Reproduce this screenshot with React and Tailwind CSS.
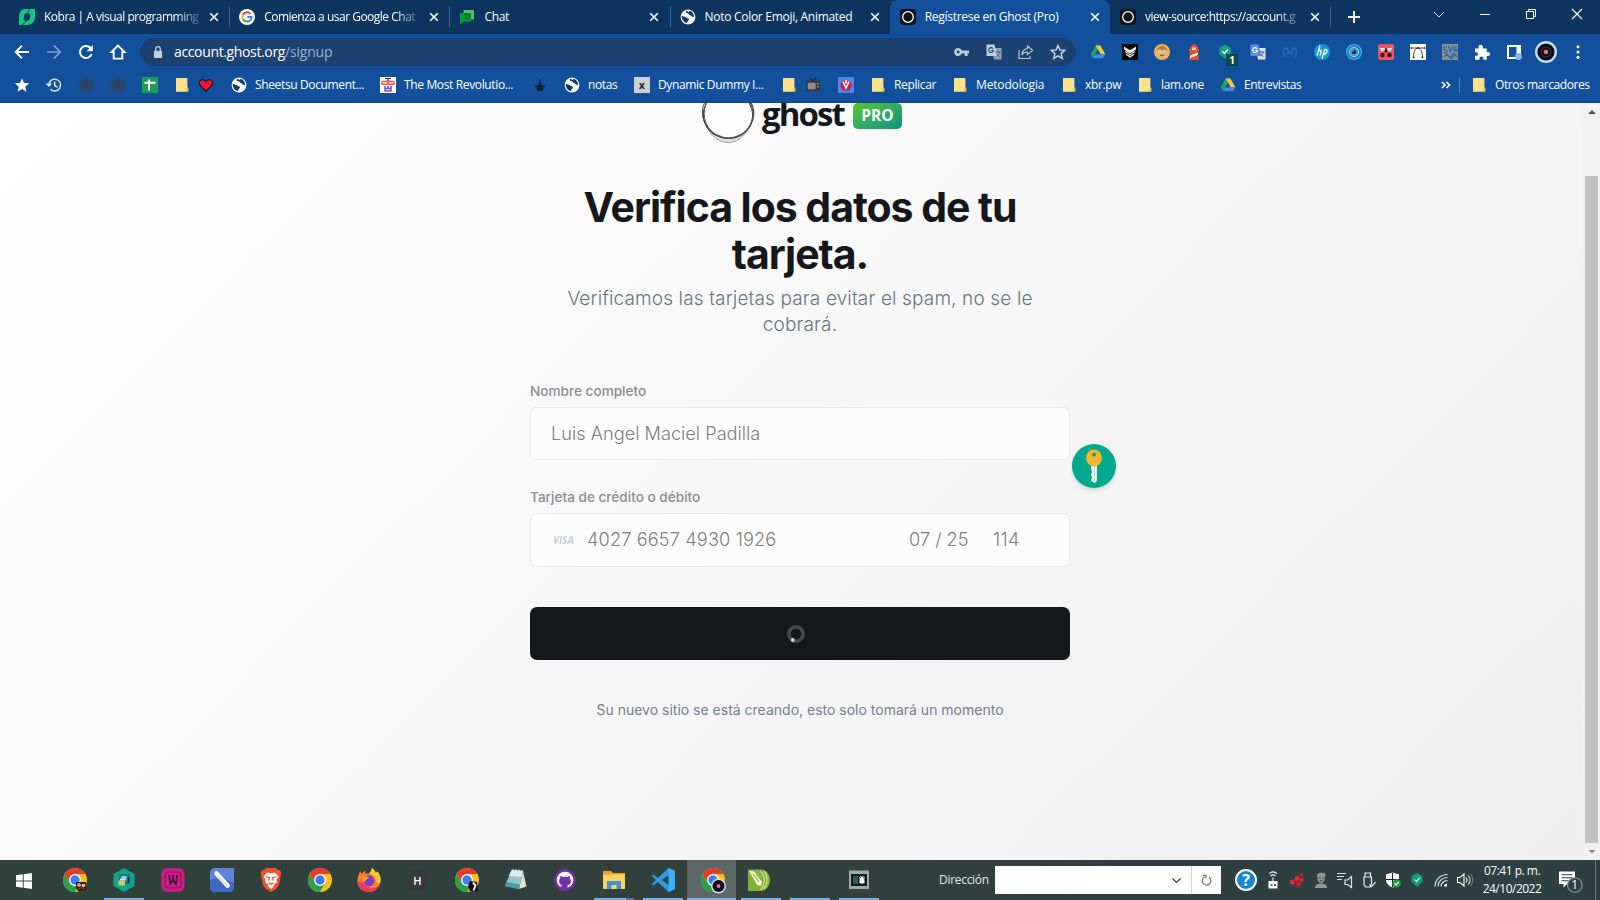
import React from "react";

const svgBase = "block shrink-0 overflow-visible";

function Svg({ size = "w-4 h-4", box = "0 0 16 16", children }) {
  return (
    <svg viewBox={box} className={`${svgBase} ${size}`} fill="none">
      {children}
    </svg>
  );
}

/* ---------- shared glyphs ---------- */

const Globe = () => (
  <Svg>
    <circle cx="8" cy="8" r="7.400" fill="#fff" />
    <path d="M6.200 1.800C5 3.200 6 4.400 7.600 4.300c1.600 0 1 1.700 2.600 1.900 1.300.2 1.200 1.600 2.600 1.600h1.400c-.1-3-2-5.300-4.600-6L8.700 3z" fill="#123b6b" />
    <path d="M1.700 6.800l3.800 1.200c1 .3 1 1.300 2.300 1.300 1.300.2 1.500 1.400.5 2.200-.8.700-.7 1.700-1.500 2.500-3-.4-5.400-3.600-5.100-7.200z" fill="#123b6b" />
  </Svg>
);

const GhostIcon = () => (
  <Svg>
    <rect width="16" height="16" rx="3.500" fill="#111417" />
    <circle cx="8" cy="8" r="5.300" stroke="#fff" strokeWidth="1.300" />
  </Svg>
);

const Drive = () => (
  <Svg>
    <path d="M5.600 1.600h4.800L8 5.700 3 14.200.7 10.200z" fill="#1fa463" />
    <path d="M5.600 1.600h4.800l5 8.600h-4.800z" fill="#fcc934" />
    <path d="M3 14.200l2.400-4h10L13 14.200z" fill="#4688f4" />
    <path d="M8 5.700l2.600 4.500H5.400z" fill="#12509b" />
  </Svg>
);

const Folder = () => (
  <Svg>
    <path d="M2 1h11.400v9.500l.8.500v3.500h-1.500L11.500 14.700H2z" fill="#fde28b" />
    <path d="M11.800 11.500l2.400-.5v3.500h-2z" fill="#f3c84c" />
  </Svg>
);

const Cross = () => (
  <Svg size="w-[10px] h-[10px]" box="0 0 10 10">
    <path d="M1.200 1.200l7.600 7.600M8.800 1.200l-7.600 7.600" stroke="#fff" strokeWidth="1.600" />
  </Svg>
);

const Translate = ({ a = "#5b8def", b = "#dfe5ee" }) => (
  <Svg>
    <path d="M6 4h9.500v11.500H8z" fill={b} />
    <path d="M.5.5h8l3 11.500h-11z" fill={a} />
    <path d="M7.200 4.800A2.400 2.400 0 1 0 7.500 6.500H5.300" stroke={a === "#5b8def" ? "#fff" : "#1d4272"} strokeWidth="1.100" />
    <path d="M9.500 8h5M12 7v1.200M13.600 8.200c-.5 2-1.800 3.300-3 4M10.500 9.600c.7 1.500 1.800 2.300 3 3" stroke="#4a5a70" strokeWidth=".9" />
  </Svg>
);

const Disc = () => (
  <Svg size="w-[22px] h-[22px]" box="0 0 22 22">
    <circle cx="11" cy="11" r="11" fill="#c3dcf8" />
    <circle cx="11" cy="11" r="8.600" fill="#0c0b14" />
    <circle cx="11" cy="11" r="5" stroke="#3a3142" strokeWidth="1.200" />
    <circle cx="11" cy="11" r="2.400" fill="#e5566a" />
    <circle cx="11" cy="11" r=".7" fill="#fff" />
  </Svg>
);

/* ---------- tab strip ---------- */

const Kobra = () => (
  <Svg>
    <path d="M5 0h11v7c0 5.500-3 9-8 9H0V8c0-3.500 1.500-7 5-8z" fill="#17c77f" />
    <path d="M6.500 4.500H11v3.700c0 2.200-1.300 3.600-3.300 3.600H4.800V8c0-2 .5-3 1.700-3.500z" fill="#0d3560" />
    <path d="M11 0l-3 4.500M8 11.800L3 16" stroke="#0d3560" strokeWidth=".8" />
  </Svg>
);

const GoogleG = () => (
  <Svg>
    <circle cx="8" cy="8" r="8" fill="#fff" />
    <path d="M11.400 4.800A4.600 4.600 0 0 0 4 5.700" stroke="#ea4335" strokeWidth="2" />
    <path d="M4 5.700a4.800 4.800 0 0 0 0 4.600" stroke="#fbbc05" strokeWidth="2" />
    <path d="M4 10.300a4.600 4.600 0 0 0 7.100 1.100" stroke="#34a853" strokeWidth="2" />
    <path d="M11.100 11.400A4.600 4.600 0 0 0 12.600 8H8.200" stroke="#4285f4" strokeWidth="2" />
  </Svg>
);

const ChatIcon = () => (
  <Svg>
    <path d="M4.500 1H15v9.500h-3V4H4.500z" fill="#5bbb7b" />
    <path d="M1 4h11v8.500H4.500L1 15.500z" fill="#00a23a" />
    <path d="M4.500 4H12v6.500H4.500z" fill="#00832d" />
  </Svg>
);

const tabs = [
  { t: "Kobra | A visual programming", icon: <Kobra />, fade: true },
  { t: "Comienza a usar Google Chat", icon: <GoogleG />, fade: true },
  { t: "Chat", icon: <ChatIcon /> },
  { t: "Noto Color Emoji, Animated", icon: <Globe /> },
  { t: "Regístrese en Ghost (Pro)", icon: <GhostIcon />, active: true },
  { t: "view-source:https://account.g", icon: <GhostIcon />, fade: true },
];

function Tab({ tab, first, afterActive }) {
  const sep = first || tab.active || afterActive ? "border-transparent" : "border-[#3f6c9c]";
  return (
    <div className={`flex h-[34px] w-[220.2px] shrink-0 ${tab.active ? "rounded-t-lg bg-[#12509b]" : ""}`}>
      <div className={`mt-[7px] flex h-5 w-full items-center border-l pl-[9px] ${sep}`}>
        {tab.icon}
        <span
          className={`ml-[9px] w-[156px] shrink-0 whitespace-nowrap text-[12px] leading-5 text-white ${
            tab.fade
              ? "tracking-[-0.5px] [mask-image:linear-gradient(to_right,#000_84%,transparent_103%)]"
              : "tracking-[-0.29px]"
          }`}
        >
          {tab.t}
        </span>
        <span className="ml-[9px]">
          <Cross />
        </span>
      </div>
    </div>
  );
}

function TabStrip() {
  return (
    <div className="flex h-[34px] bg-[#0d3560] pl-[9px]">
      {tabs.map((tab, i) => (
        <Tab key={tab.t} tab={tab} first={i === 0} afterActive={i === 5} />
      ))}
      <div className="mt-[7px] flex h-5 w-[46px] items-center justify-center border-l border-[#3f6c9c]">
        <Svg size="w-3 h-3" box="0 0 12 12">
          <path d="M6 0v12M0 6h12" stroke="#fff" strokeWidth="2" />
        </Svg>
      </div>
      <div className="ml-auto flex h-7 items-center">
        <div className="flex w-[46px] justify-center">
          <Svg size="w-[10px] h-[10px]" box="0 0 10 10">
            <path d="M0 3l5 5 5-5" stroke="#d7e2ef" />
          </Svg>
        </div>
        <div className="flex w-[46px] justify-center">
          <div className="h-px w-[10px] bg-white" />
        </div>
        <div className="flex w-[46px] justify-center">
          <Svg size="w-[10px] h-[10px]" box="0 0 10 10">
            <path d="M.5 2.500h7v7h-7zM2.500 2.500v-2h7v7h-2" stroke="#fff" />
          </Svg>
        </div>
        <div className="flex w-[46px] justify-center">
          <Svg size="w-[10px] h-[10px]" box="0 0 10 10">
            <path d="M0 0l10 10M10 0L0 10" stroke="#fff" strokeWidth="1.100" />
          </Svg>
        </div>
      </div>
    </div>
  );
}

/* ---------- toolbar ---------- */

const navIcons = [
  <Svg key="b"><path d="M15 8H2.500M8 1.700L1.700 8 8 14.300" stroke="#fff" strokeWidth="1.900" /></Svg>,
  <Svg key="f"><path d="M1 8h12.500M8 1.700L14.300 8 8 14.300" stroke="#7ea1cc" strokeWidth="1.700" /></Svg>,
  <Svg key="r">
    <path d="M13.600 10.200A6 6 0 1 1 12.300 3.800l1.500 1.600" stroke="#fff" strokeWidth="2" />
    <path d="M14.800 1v6.200H8.600z" fill="#fff" />
  </Svg>,
  <Svg key="h"><path d="M8 1.500L1.500 8H3.700v6.600h8.600V8h2.200z" stroke="#fff" strokeWidth="1.900" /></Svg>,
];

const urlIcons = [
  <Svg key="k">
    <path d="M7.800 6.500H15v3h-1.500V12h-2.700V9.500H7.800a4 4 0 1 1 0-3z" fill="#c3cddb" />
    <circle cx="4.200" cy="8" r="1.400" fill="#1d4272" />
  </Svg>,
  <Translate key="t" a="#c3cddb" b="#8ea2bd" />,
  <Svg key="s">
    <path d="M1 6v8.500h11V12" stroke="#b9c5d6" strokeWidth="1.200" />
    <path d="M9.500 2l5.200 4.300-5.200 4.300V8c-2.500 0-4.300.8-5.700 2.900C4.200 7.500 6 5 9.500 4.600z" stroke="#b9c5d6" strokeWidth="1.200" />
  </Svg>,
  <Svg key="st">
    <path d="M8 1.500l2 4.500 4.800.4-3.700 3.200 1.200 4.800L8 11.800l-4.300 2.600 1.200-4.800L1.200 6.400 6 6z" stroke="#c9d3e0" strokeWidth="1.400" />
  </Svg>,
];

const extensions = [
  <Drive key="d" />,
  <Svg key="owl">
    <rect width="16" height="16" fill="#080808" />
    <path d="M2 2.500l3.500 2.300L8 6l2.500-1.200L14 2.500v3L10.500 8 8 9.500 5.500 8 2 5.500z" fill="#e8e8e8" />
    <path d="M3 7.500l3.500 2M13 7.500l-3.500 2M4 10.300L8 13l4-2.700M6.500 10.500h3" stroke="#e8e8e8" strokeWidth="1.300" />
  </Svg>,
  <Svg key="face">
    <circle cx="8" cy="8" r="8" fill="#f0b64c" />
    <circle cx="8" cy="8.500" r="5.300" fill="#dfb183" />
    <path d="M3 7a5 5 0 0 1 10 0l-2-1.500H5z" fill="#b3772d" />
    <circle cx="5.800" cy="8" r="1.200" fill="#fff" /><circle cx="10.200" cy="8" r="1.200" fill="#fff" />
    <circle cx="5.900" cy="8" r=".6" fill="#333" /><circle cx="10.100" cy="8" r=".6" fill="#333" />
    <path d="M6 11c1.300.8 2.700.8 4 0" stroke="#8b4a2b" />
  </Svg>,
  <Svg key="lh">
    <path d="M8 0l4 3v2h1v2h-1l1 9H3l1-9H3V5h1V3z" fill="#ef4b2f" />
    <path d="M6 3.500h4V6H6z" fill="#ffd9a0" />
    <path d="M4.500 11.500l7-3V11l-7.300 3z" fill="#fff" />
  </Svg>,
  <div key="k" className="relative">
    <Svg><path d="M7 .5l5.700 3.200v6.600L7 14.500l-5.700-4.200V3.700z" fill="#16a182" /><path d="M4.300 7.300l2 2 3.600-3.800" stroke="#fff" strokeWidth="1.300" /></Svg>
    <span className="absolute left-2 top-[10px] flex h-3 w-3 items-center justify-center bg-[#0d4a4a] text-[10px] font-bold leading-3 text-white">1</span>
  </div>,
  <Translate key="t" />,
  <Svg key="m"><path d="M3 12.500C1 10 1 5 3.500 4.500 5.500 4.300 7 7.500 8 9.500c1-2 2.500-5.200 4.500-5C15 5 15 10 13 12.500M5.500 11V8M10.500 11V8" stroke="#2566b5" strokeWidth="1.900" /></Svg>,
  <Svg key="hp">
    <circle cx="8" cy="8" r="8" fill="#1598d6" />
    <path d="M6 1.500L3 11.500M4.700 7c1-1.300 3-1.300 2.500.3L6 11.500M10.800 5L8 14.500M10.500 6c1.200-1 3-.7 2.500 1.200-.5 2-1.200 3.500-3.600 3.500" stroke="#fff" strokeWidth="1.300" />
  </Svg>,
  <Svg key="eye">
    <circle cx="8" cy="8" r="7.400" fill="#1c6aa8" stroke="#3fb5e8" strokeWidth="1.200" />
    <circle cx="8" cy="8" r="4.800" fill="#3a9fd6" stroke="#9adcf5" strokeWidth="1" />
    <circle cx="8" cy="8" r="2.300" fill="#062c49" /><circle cx="7" cy="7" r=".7" fill="#d7f2ff" />
  </Svg>,
  <Svg key="red">
    <rect width="16" height="16" rx="2" fill="#ea5465" />
    <path d="M2 4.500l5 .8M14 4.500l-5 .8M3 6.800l3-1M13 6.800l-3-1" stroke="#fff" strokeWidth="1.500" />
    <path d="M6.800 4.500h2.400v4H6.800z" fill="#4b1a2a" />
    <circle cx="4.500" cy="11" r="2.300" fill="#3a1420" /><circle cx="11.500" cy="11" r="2.300" fill="#3a1420" />
  </Svg>,
  <Svg key="bez">
    <rect width="16" height="16" fill="#fff" />
    <path d="M1 4h14M3.500 13c0-5.500 2-9 4.500-9s4.500 3.500 4.500 9" stroke="#333" strokeWidth=".9" />
    <path d="M7 3h2v2H7zM.5 3.200h1.600v1.600H.5zM13.900 3.200h1.600v1.600h-1.600zM2.700 12.500h1.800v1.800H2.700zM11.500 12.500h1.800v1.800h-1.800z" fill="#333" />
  </Svg>,
  <Svg key="svg">
    <rect width="16" height="16" fill="#8c8f8e" />
    <path d="M5 3C1 2 1 5.500 3.500 6S5 9.500 1.500 8.500M6.500 2l2 6 2.500-6M15 3c-4-1-4 5 0 4V5.500h-2M2 13l3-3 3 4 4-5 3 4M9 15l5-5" stroke="#2268b0" strokeWidth="1.300" />
  </Svg>,
  <Svg key="pz">
    <path d="M1 4.500h3.800C4 2 5.200.8 6.700.8S9.400 2 8.700 4.500h4V8.300C15 7.500 16 8.700 16 10s-1 2.500-3.300 1.700v4H9.300c.7-2.200-.5-3.200-1.800-3.200s-2.500 1-1.800 3.200H1v-4.200c2.300.7 3-.5 3-1.600s-.7-2.200-3-1.600z" fill="#fff" />
  </Svg>,
  <Svg key="sp">
    <path d="M2 2h12v12H2z" stroke="#fff" strokeWidth="2" /><path d="M10.500 2H14v9h-3.500z" fill="#fff" />
    <circle cx="12.500" cy="12.500" r="3.400" fill="#8ab4f8" />
  </Svg>,
  <Disc key="disc" />,
  <Svg key="dots"><circle cx="8" cy="2.700" r="1.500" fill="#fff" /><circle cx="8" cy="8" r="1.500" fill="#fff" /><circle cx="8" cy="13.300" r="1.500" fill="#fff" /></Svg>,
];

function Toolbar() {
  return (
    <div className="flex h-[36px] items-center pl-[6px]">
      {navIcons.map((icon, i) => (
        <div key={i} className="flex w-8 justify-center">{icon}</div>
      ))}
      <div className="ml-[6px] flex h-7 w-[936px] items-center rounded-full bg-[#1d4272] pl-[12px] pr-[2px]">
        <Svg size="w-3 h-3" box="0 0 12 12">
          <path d="M2 4.800h8V12H2z" fill="#c3cddb" />
          <path d="M3.700 5V3a2.300 2.300 0 0 1 4.600 0v2" stroke="#c3cddb" strokeWidth="1.300" />
        </Svg>
        <div className="ml-[10px] whitespace-nowrap text-[14px] leading-5 tracking-[-0.36px] text-white">
          account.ghost.org<span className="tracking-[-0.2px] text-[#9db5d3]">/signup</span>
        </div>
        <div className="ml-auto flex">
          {urlIcons.map((icon, i) => (
            <div key={i} className="flex w-8 justify-center">{icon}</div>
          ))}
        </div>
      </div>
      <div className="ml-[6px] flex items-center">
        {extensions.map((icon, i) => (
          <div key={i} className="flex w-8 items-center justify-center">{icon}</div>
        ))}
      </div>
    </div>
  );
}

/* ---------- bookmarks ---------- */

const Dim = () => (
  <Svg>
    <circle cx="8" cy="8" r="7.400" fill="#20497a" stroke="#2f4763" />
    <path d="M8 3l2.500 5L8 13 5.500 8z" fill="#3a3f52" /><circle cx="8" cy="8" r="1.500" fill="#6b3040" />
  </Svg>
);

const bookmarks = [
  { w: "w-6", icon: <Folder /> },
  { w: "w-[33px]", icon: <Svg><path d="M8 14.500L2 8.200C.5 6 1.500 2.800 4.300 2.600 6 2.500 7.400 3.500 8 4.800c.6-1.300 2-2.300 3.700-2.200C14.500 2.800 15.500 6 14 8.200z" fill="#f4142f" stroke="#26101c" strokeWidth="1.200" /></Svg> },
  { w: "w-[149px]", icon: <Globe />, t: "Sheetsu Document..." },
  {
    w: "w-[152px]", t: "The Most Revolutio...",
    icon: (
      <Svg>
        <rect width="16" height="16" fill="#fff" />
        <path d="M5 1.500h6M6.500 3h3" stroke="#333" strokeWidth="1.200" />
        <path d="M2 4.500h12v2.700H2zM3.500 7.200h9M8 3v5" stroke="#ef5a3f" strokeWidth="1.400" />
        <path d="M5 9v5h6V9M5 11.500h6M8 9v2" stroke="#7a4bd6" strokeWidth="1.500" />
      </Svg>
    ),
  },
  { w: "w-8", icon: <Svg><path d="M8 1l1.300 6.200 2.700 2.300-1.800 4.500H5.800L4 9.500l2.700-2.300z" fill="#0c2237" /><path d="M3 7l2 6M13 7l-2 6" stroke="#1d3f63" /></Svg> },
  { w: "w-[70px]", icon: <Globe />, t: "notas" },
  {
    w: "w-[147px]", t: "Dynamic Dummy I...",
    icon: <div className="flex h-4 w-4 shrink-0 items-center justify-center bg-[#cfcfcf] text-[10px] font-bold leading-4 text-[#222]">x</div>,
  },
  { w: "w-6", icon: <Folder /> },
  {
    w: "w-[33px]",
    icon: (
      <Svg>
        <path d="M4.500.8L8 4l3.500-3.200" stroke="#222" strokeWidth="1.100" />
        <rect x="1" y="4" width="14" height="10" rx="1.300" fill="#3b3434" /><rect x="2.700" y="5.700" width="8" height="6.500" rx=".8" fill="#8d8a92" />
        <path d="M12.800 6v1.500M12.800 9v1.500" stroke="#c9c3c0" strokeWidth="1.200" />
      </Svg>
    ),
  },
  { w: "w-8", icon: <Svg><rect width="16" height="16" fill="#4c86ee" /><circle cx="8" cy="8.300" r="5.600" fill="#cf1f3c" /><path d="M5 4.500L8 11l3-6.500M8 3v3.500" stroke="#fff" strokeWidth="1.600" /></Svg> },
  { w: "w-[82px]", icon: <Folder />, t: "Replicar" },
  { w: "w-[109px]", icon: <Folder />, t: "Metodologia", wide: true },
  { w: "w-[76px]", icon: <Folder />, t: "xbr.pw" },
  { w: "w-[83px]", icon: <Folder />, t: "lam.one" },
  { w: "w-[218px]", icon: <Drive />, t: "Entrevistas" },
];

const bookmarkIcons = [
  <Svg key="a"><path d="M8 1.200l2 4.700 5.200.4-4 3.400 1.300 5L8 12l-4.500 2.700 1.300-5-4-3.400L6 5.900z" fill="#fff" /></Svg>,
  <Svg key="b"><path d="M2.800 8a5.900 5.900 0 1 1 1.700 4.200M.5 6.500L2.800 9l2.500-2.500M8.700 4.500v4l2.800 1.700" stroke="#e6eef8" strokeWidth="1.400" /></Svg>,
  <Dim key="c" />,
  <Dim key="d" />,
  <Svg key="e"><rect width="16" height="16" fill="#1b9c57" /><path d="M7 2.500v11M2.500 5.700h11" stroke="#fff" strokeWidth="1.900" /></Svg>,
];

function Bookmarks() {
  return (
    <div className="flex h-[33px] items-center border-b border-[#0d4688] pb-[3px] pl-[6px] text-[12px] leading-5 text-white">
      {bookmarkIcons.map((icon, i) => (
        <div key={i} className="flex w-8 shrink-0 justify-center">{icon}</div>
      ))}
      <div className="ml-2 flex items-center">
        {bookmarks.map((b, i) => (
          <div key={i} className={`flex shrink-0 items-center gap-2 ${b.w}`}>
            {b.icon}
            {b.t && <span className={`whitespace-nowrap ${b.wide ? "tracking-[-0.16px]" : "tracking-[-0.36px]"}`}>{b.t}</span>}
          </div>
        ))}
      </div>
      <Svg size="w-4 h-4">
        <path d="M4 5l3 3-3 3M8.500 5l3 3-3 3" stroke="#fff" strokeWidth="1.600" />
      </Svg>
      <div className="ml-[5px] h-4 w-px bg-[#4f82bd]" />
      <div className="ml-[11px] flex items-center gap-2">
        <Folder />
        <span className="whitespace-nowrap tracking-[-0.44px]">Otros marcadores</span>
      </div>
    </div>
  );
}

/* ---------- page ---------- */

function GhostLogo() {
  return (
    <div className="-mt-[17px] flex h-[57px] w-full items-center pl-[171px]">
      <Svg size="w-[54px] h-[54px]" box="0 0 54 54">
        <ellipse cx="27" cy="29" rx="22.500" ry="25.500" fill="#e3e4e4" stroke="#8d8f91" strokeWidth=".8" />
        <ellipse cx="29" cy="27" rx="23" ry="23.500" fill="#e9eaea" stroke="#85878a" strokeWidth=".9" />
        <ellipse cx="26.500" cy="26" rx="25.500" ry="23.500" transform="rotate(28 26.500 26)" fill="#fdfdfd" stroke="#505254" strokeWidth="1" />
        <ellipse cx="27.500" cy="26" rx="25.300" ry="24" transform="rotate(-18 27.500 26)" stroke="#3b3d3f" strokeWidth="1.100" />
        <ellipse cx="27.500" cy="25.500" rx="24.300" ry="25" stroke="#55585b" strokeWidth="1" />
      </Svg>
      <span className="-mt-px ml-[7px] w-[84px] whitespace-nowrap text-[33px] font-bold leading-[44px] tracking-[-1.9px] text-[#15171a]">ghost</span>
      <span className="ml-[7px] mt-[3px] flex h-[26px] w-[49px] items-center justify-center rounded-[5px] bg-linear-to-br from-[#56c70f] to-[#06907f] text-[15.5px] font-bold leading-none text-white">
        PRO
      </span>
    </div>
  );
}

const field = "flex items-center rounded-[7px] border border-[#e9eaeb] bg-[#fcfcfc] text-[18.2px] font-light text-[#7c7e80]";
const label = "text-[13.6px] font-medium leading-5 text-[#8a8c8e]";

function SignupPage() {
  return (
    <main className="relative flex h-[757px] overflow-hidden bg-linear-135 from-white to-[#eeeeee]">
      <div className="flex-1 pl-[530px]">
        <div className="w-[540px] font-['Inter',sans-serif]">
          <div className="font-['Open_Sans',sans-serif]">
            <GhostLogo />
          </div>
          <h1 className="mt-[41px] text-center text-[41px] font-bold leading-[47px] tracking-[-1.04px] text-[#15171a]">
            Verifica los datos de tu
            <br />
            tarjeta.
          </h1>
          <p className="mt-[8px] text-center text-[19px] font-light leading-[26px] tracking-[0.14px] text-[#66757d]">
            Verificamos las tarjetas para evitar el spam, no se le
            <br />
            cobrará.
          </p>
          <div className={`mt-[43px] ${label}`}>Nombre completo</div>
          <div className={`mt-[6px] h-[53px] pl-[20px] ${field}`}>Luis Angel Maciel Padilla</div>
          <div className={`mt-[27px] ${label}`}>Tarjeta de crédito o débito</div>
          <div className={`mt-[6px] h-[54px] pl-[22px] ${field}`}>
            <span className="w-[34px] font-['Open_Sans',sans-serif] text-[10px] font-bold italic text-[#c8ced8]">VISA</span>
            <span className="w-[322px] tracking-[0.12px]">4027 6657 4930 1926</span>
            <span className="w-[84px]">07 / 25</span>
            <span className="tracking-[0.3px]">114</span>
          </div>
          <div className="mt-[40px] flex h-[53px] items-center justify-center rounded-[7px] bg-[#15171a] pr-2">
            <Svg size="w-[18px] h-[18px]" box="0 0 18 18">
              <circle cx="9" cy="9" r="7.200" stroke="#46484b" strokeWidth="3.600" />
              <circle cx="5.800" cy="15" r="1.900" fill="#d2d3d4" />
            </Svg>
          </div>
          <p className="mt-[40px] text-center text-[14px] leading-5 text-[#738087]">
            Su nuevo sitio se está creando, esto solo tomará un momento
          </p>
        </div>
      </div>
      <div className="flex w-[17px] flex-col items-center bg-[#f1f1f1]">
        <Svg size="w-[17px] h-[17px]" box="0 0 17 17"><path d="M5 11h8L9 7z" fill="#505050" /></Svg>
        <div className="mt-[56px] h-[667px] w-[13px] bg-[#c1c1c1]" />
        <Svg size="w-[17px] h-[17px]" box="0 0 17 17"><path d="M5.500 7h7L9 10.700z" fill="#8a8a8a" /></Svg>
      </div>
      <div className="absolute left-[1072px] top-[341px] rounded-full shadow-md">
        <Svg size="w-[44px] h-[44px]" box="0 0 44 44">
          <circle cx="22" cy="22" r="22" fill="#00a88e" />
          <path d="M19.300 20h5.600v17l-2.300 2-3.300-2v-2l1.200-1.500-1.200-1.500v-2.500l1.200-1.500-1.200-1.500z" fill="#fff" />
          <path d="M22.500 22v15" stroke="#b7d8d6" strokeWidth="1.300" />
          <ellipse cx="22" cy="14" rx="8" ry="8.500" fill="#f1b72d" />
          <circle cx="22" cy="10.500" r="1.900" fill="#4d8f52" />
        </Svg>
      </div>
    </main>
  );
}

/* ---------- taskbar ---------- */

function Chrome({ children }) {
  return (
    <Svg size="w-6 h-6" box="0 0 24 24">
      <circle cx="12" cy="12" r="12" fill="#fbc116" />
      <path d="M1.600 6a12 12 0 0 1 20.800 0H12L6.800 15z" fill="#e33b2e" />
      <path d="M1.600 6A12 12 0 0 0 12 24l5.200-9H6.800z" fill="#2aa14b" />
      <circle cx="12" cy="12" r="6" fill="#fff" />
      <circle cx="12" cy="12" r="4.700" fill="#3b7de9" />
      {children}
    </Svg>
  );
}

const apps = [
  { icon: <Chrome><path d="M13 14h10v9l-4-1-3 2-3-4z" fill="#2b1a14" /><circle cx="16" cy="17" r="2" fill="#d9a27e" /><circle cx="20.500" cy="17.500" r="1.800" fill="#e8c4a4" /><path d="M15 21l4-1.500 3 2" stroke="#c53a34" /></Chrome> },
  { run: "full", icon: <Svg size="w-6 h-6" box="0 0 24 24"><path d="M12 0l10.500 6v12L12 24 1.500 18V6z" fill="#0fa58a" /><rect x="7" y="6" width="11" height="10" fill="#2c6f86" /><path d="M9.500 8h5v4.500h-5z" fill="#8ed8ef" /><rect x="6.500" y="12.500" width="6.500" height="5" fill="#e0c86a" /><path d="M8.500 12.500V11h2.500v1.500" stroke="#f3f3f3" /><path d="M16.500 9v6" stroke="#143d49" strokeWidth="1.500" /></Svg> },
  { icon: <Svg size="w-6 h-6" box="0 0 24 24"><rect x=".5" width="23" height="24" rx="6" fill="#cf1c86" /><path d="M4 16V8c0-2.500 1-4 4-4h8c3 0 4 1.500 4 4v8c0 2.500-1 4-4 4H8c-3 0-4-1.500-4-4z" stroke="#7d1a5e" strokeWidth="1.200" /><path d="M8 7l1.500 9L12 12l3 4 1.200-9M12 7v4" stroke="#3d1235" strokeWidth="1.700" /></Svg> },
  { icon: <Svg size="w-6 h-6" box="0 0 24 24"><path d="M5 0h19v19c0 3-2 5-5 5H5c-3 0-5-2-5-5V5c0-3 2-5 5-5z" fill="#5e83d8" /><path d="M0 12c8-3 16-1 24 3v4c0 3-2 5-5 5H5c-3 0-5-2-5-5z" fill="#4268c4" /><path d="M6.500 5.500l11 12" stroke="#fff" strokeWidth="4.500" strokeLinecap="round" /><path d="M8 8l9.500 10" stroke="#c5d1ee" strokeWidth="1.200" /></Svg> },
  { icon: <Svg size="w-6 h-6" box="0 0 24 24"><path d="M7 0h10l2.200 2.300 1.800-.3 1.500 3.200-.6 2L20 17l-3 4-5 3-5-3-3-4L2.100 7.200l-.6-2L3 2l1.800.3z" fill="#f4502a" /><path d="M8 4.500l4 .8 4-.8 3.500 4.300-2.200 3 .7 2.500-3.200 2.500v1.700L12 21l-2.800-2.500v-1.700L6 14.300l.7-2.500-2.200-3z" fill="#fff" /><path d="M6.500 8.500l4 1.200-.8 3M17.500 8.500l-4 1.200.8 3M9.500 15l2.500 1.200 2.500-1.200" stroke="#f4502a" strokeWidth="1.300" /></Svg> },
  { icon: <Chrome /> },
  { icon: <Svg size="w-6 h-6" box="0 0 24 24"><path d="M12 24C5 24 0 19 .5 12 .8 8 2 5 3.500 3l.7 3C6 4 7 3 8.500 2.500L8 5.500h4C14 4 14.500 2 14.800 0c2 1.200 3.400 3 4 5L20.500 3.500C23 7 24 10 23.500 13.500 23 19.500 18 24 12 24z" fill="#ff7b2e" /><path d="M14.800 0c2 1.200 3.400 3 4 5L20.500 3.500C23 7 24 10 23.500 13.500 22.500 17 20 16 19 12c-1-4-4-5-7-6.500C14 4 14.500 2 14.800 0z" fill="#ffc936" /><path d="M1 15c2 7 7 9 11 9s9-2 11-8c-3 4-7 5-10 4s-5-3-7-5-4-2-5 0z" fill="#f0365c" /><circle cx="12" cy="12.800" r="5.500" fill="#7a3ecb" /><path d="M5 9c3-1.500 5-.5 7 .5-1 1.500-3 1.500-3.500 3.500S5 13 5 9z" fill="#ff9c2e" /></Svg> },
  { icon: <div className="flex h-[18px] w-[18px] items-center justify-center bg-[#363a40] text-[11px] font-semibold leading-none text-white">H</div> },
  { icon: <Chrome><path d="M15 13l7 1 1 9h-8l-2-5z" fill="#0d1015" /><path d="M18 14.500l2.500 3-2 5" stroke="#f2f2f2" strokeWidth="2" /></Chrome> },
  { icon: <Svg size="w-6 h-6" box="0 0 24 24"><path d="M7.500 2L19 3l-4 18L1 18z" fill="#8fc5cf" /><path d="M7.500 2L19 3l-1.500 6L4.800 8z" fill="#d9eef0" /><path d="M19 3l3.500 15.500L15 21z" fill="#e2dfd0" /><path d="M3 14l13 2.500-1 4.500L1 18z" fill="#4f97a8" /><path d="M9 1v2M12 1.200v2M15 1.500v2M18 1.800v2" stroke="#f5f5f5" /></Svg> },
  { icon: <Svg size="w-6 h-6" box="0 0 24 24"><circle cx="12" cy="12" r="11" fill="#732fa5" /><circle cx="12" cy="12" r="8.300" fill="#fff" /><path d="M9.600 20.500v-2.600c-2.200.5-2.700-1-3-1.500M9.700 17c-2-.3-3.400-1.200-3.400-4 0-1 .4-1.800 1-2.300-.2-.7-.2-1.500.1-2.400.8 0 1.600.4 2.400 1 1.400-.4 3-.4 4.400 0 .8-.6 1.600-1 2.400-1 .3.900.3 1.700.1 2.400.6.500 1 1.300 1 2.300 0 2.800-1.400 3.700-3.400 4v3.500H9.700z" fill="#732fa5" stroke="#732fa5" strokeWidth=".5" /></Svg> },
  { run: "split", icon: <Svg size="w-6 h-6" box="0 0 24 24"><path d="M1 3h8l2 2h12v5H1z" fill="#e8a526" /><path d="M1 6.500h22V21H1z" fill="#fbd562" /><path d="M5 21v-8h14v8h-4.500v-4h-5v4z" fill="#3d93d2" /></Svg> },
  { run: "full", icon: <Svg size="w-6 h-6" box="0 0 24 24"><path d="M17.500 0L24 3v18l-6.500 3L7 14l-4.300 3.500L.5 16.300 5 12 .5 7.700l2.200-1.200L7 10zM18 6.800L11 12l7 5.200z" fill="#2b9ae8" fillRule="evenodd" /><path d="M17.500 0L24 3v18l-6.500 3z" fill="#40aef5" /></Svg> },
  { run: "active", icon: <Chrome><circle cx="17.500" cy="18" r="7.500" fill="#c3dcf8" /><circle cx="17.500" cy="18" r="6" fill="#0c0b14" /><circle cx="17.500" cy="18" r="1.900" fill="#ef7286" /></Chrome> },
  { run: "full", shift: true, icon: <Svg size="w-6 h-6" box="0 0 24 24"><path d="M1 1.500h13c5 0 9 5 9 10.500s-4 11-9 11H1z" fill="#7eb338" /><path d="M13 3c5 4 6 12 1 19M17 3c4 5 4 13 0 18" stroke="#c6e08b" strokeWidth="1.300" /><path d="M2 3l3 5 5 9 4 1 1-4-4-7-5-4z" fill="#f3f7df" /><path d="M6 6l6 8M9 6l5 6" stroke="#7eb338" strokeWidth="1.100" /></Svg> },
  { run: "full", icon: null },
  { run: "full", icon: <Svg size="w-6 h-6" box="0 0 24 24"><rect x="2" y="2.500" width="20" height="18.500" fill="#a3a8a8" /><rect x="4" y="6" width="16" height="12" fill="#0e1c1e" /><path d="M6 8h5v8H6z" fill="#31595b" /><ellipse cx="15" cy="12.500" rx="2.400" ry="3.300" fill="#fff" /><path d="M12 9.500l6 5M18 9.500l-6 5M13.500 8l1.500 2 1.500-2" stroke="#fff" /></Svg> },
];

function AppCell({ app }) {
  return (
    <div className={`flex h-10 w-[49px] shrink-0 flex-col items-center ${app.run === "active" ? "bg-[#5b6866]" : ""}`}>
      <div className={`flex h-[38px] items-center pt-[2px] ${app.shift ? "pr-[3px]" : ""} ${app.run === "active" ? "pl-[2px]" : ""}`}>{app.icon}</div>
      {app.run === "split" && (
        <div className="flex h-[2px] w-10">
          <div className="w-8 bg-[#76b0e8]" />
          <div className="flex-1 bg-[#4d74a0]" />
        </div>
      )}
      {app.run === "full" && <div className="h-[2px] w-10 bg-[#76b0e8]" />}
      {app.run === "active" && <div className="h-[2px] w-full bg-[#76b0e8]" />}
    </div>
  );
}

const tray = [
  <Svg key="a" size="w-4 h-[18px]" box="0 0 16 18"><path d="M3.500 10h9v7.500h-9z" fill="#fff" /><path d="M8 10V6.500M5.500 5c1.500-1.500 3.500-1.500 5 0M4 2.700c2.500-2.300 5.500-2.300 8 0" stroke="#fff" strokeWidth="1.100" /><path d="M5.500 14h2M9 14h2" stroke="#2d3f3f" strokeWidth="1.300" /></Svg>,
  <Svg key="b"><path d="M4 10l3-3 4-1 2-4M7 7l2 6" stroke="#8d1a20" strokeWidth="1.500" /><circle cx="3.500" cy="10" r="2.600" fill="#dd2430" /><circle cx="8" cy="6.500" r="2.500" fill="#e42a36" /><circle cx="12.500" cy="3" r="1.900" fill="#c72029" /><circle cx="9.500" cy="12" r="2.500" fill="#c72029" /><circle cx="12.500" cy="8" r="2" fill="#dd2430" /></Svg>,
  <Svg key="c"><path d="M4 2.500c2-2 6-2.500 8.500-1L11.500 8c-.5 2-2 3-3.500 3s-3-1-3.500-3z" fill="#8f9797" /><path d="M2 16c0-3 2.500-4.500 6-4.500s6 1.500 6 4.500z" fill="#8f9797" /><path d="M5.500 6h2M9 6h2M6.800 8.700h2.500" stroke="#3a4646" /></Svg>,
  <Svg key="d"><path d="M0 1.500h9M0 4.500h7M0 7.500h5" stroke="#dce2e2" strokeWidth="1.200" /><path d="M8 8h2.500L14.500 4.500v11L10.500 12.500H8z" stroke="#dce2e2" strokeWidth="1.200" /></Svg>,
  <Svg key="e"><path d="M4 1h5.500v4H4zM3 5h7.500v6.500L9 15H4.500L3 12.500z" stroke="#eef1f1" strokeWidth="1.200" /><path d="M8.500 12.500l2 2.200 4-4.500" stroke="#eef1f1" strokeWidth="1.200" /></Svg>,
  <Svg key="f"><path d="M7.500.5l6.500 2v5.500c0 3.500-3 6-6.500 7.500C4 14 1 11.500 1 8V2.500z" fill="#fff" /><path d="M7.500 1v14M1 7.500h13" stroke="#172422" strokeWidth="1.200" /><circle cx="11.700" cy="11.500" r="4.300" fill="#1f9a42" /><path d="M9.600 11.500l1.500 1.500 2.700-3" stroke="#fff" strokeWidth="1.200" /></Svg>,
  <Svg key="g"><path d="M8 1l5.500 3v5.500L8 15l-5.500-5.500V4z" fill="#119a7c" /><path d="M5.500 7.500l2 2 3.500-4" stroke="#b6f0df" strokeWidth="1.200" /></Svg>,
  <Svg key="h"><path d="M2 14.500C2 8 7 2.500 14.500 2.500M5 14.500c0-5 4-9 9.500-9M8 14.500c0-3.500 2.800-6 6.500-6" stroke="#dfe4e4" strokeWidth="1.200" /><path d="M11 14.500c0-2 1.500-3 3-3v3z" fill="#fff" /></Svg>,
  <Svg key="i"><path d="M.5 5.500H3l4-3.500v12L3 10.500H.5z" stroke="#fff" strokeWidth="1.100" /><path d="M9 5.500c1.200 1.500 1.200 3.500 0 5M11.200 3.500c2.300 2.600 2.300 6.400 0 9" stroke="#e6eaea" strokeWidth="1.100" /><path d="M13.500 2c3 3.500 3 8.500 0 12" stroke="#7b8787" strokeWidth="1.100" /></Svg>,
];

function Taskbar() {
  return (
    <footer className="flex h-10 items-center bg-linear-to-r from-[#2f423b] via-[#32403d] to-[#2c3f43] text-white">
      <div className="flex w-[50px] shrink-0 justify-center pr-[2px] pt-[1px]">
        <Svg>
          <path d="M0 2.300L6.800 1.300v6.200H0zM7.700 1.200L16 0v7.500H7.700zM0 8.400h6.800v6.300L0 13.700zM7.700 8.400H16V16l-8.300-1.200z" fill="#fff" />
        </Svg>
      </div>
      {apps.map((app, i) => (
        <AppCell key={i} app={app} />
      ))}
      <div className="ml-[56px] w-[56px] whitespace-nowrap text-[12px] tracking-[-0.3px] text-[#e4e8e8]">Dirección</div>
      <div className="flex h-7 w-[226px] shrink-0 bg-white">
        <div className="flex w-[197px] items-center justify-end border-r border-[#d4d4d4] pr-[10px]">
          <Svg size="w-[9px] h-[9px]" box="0 0 9 9"><path d="M.5 2.500l4 4 4-4" stroke="#333" strokeWidth="1.100" /></Svg>
        </div>
        <div className="flex flex-1 items-center justify-center">
          <Svg size="w-[11px] h-[11px]" box="0 0 11 11"><path d="M8 2.200A4.300 4.300 0 1 1 3.500 2M2 .5h3v3" stroke="#777" strokeWidth="1.300" /></Svg>
        </div>
      </div>
      <div className="ml-[14px] flex h-[22px] w-[22px] shrink-0 items-center justify-center rounded-full border-2 border-white bg-[#1587d2] text-[16px] font-bold leading-none">?</div>
      <div className="ml-1 flex">
        {tray.map((icon, i) => (
          <div key={i} className="flex w-6 shrink-0 items-center justify-center">{icon}</div>
        ))}
      </div>
      <div className="ml-[2px] w-[66px] text-center text-[12px] leading-[18px] tracking-[-0.5px]">
        <div>07:41 p. m.</div>
        <div>24/10/2022</div>
      </div>
      <div className="ml-[14px] mt-1">
        <Svg size="w-6 h-6" box="0 0 24 24">
          <path d="M0 1.500h16v12.500H8L4.500 17.500V14H0z" fill="#fff" />
          <path d="M2.500 4.700h11M2.500 7.700h11M2.500 10.700h7" stroke="#2d3f3f" strokeWidth="1.100" />
          <circle cx="15.800" cy="15" r="7.300" fill="#2f4144" stroke="#8d9798" strokeWidth="1.100" />
          <text x="15.800" y="19.200" textAnchor="middle" fontSize="12" fill="#fff" fontFamily="Open Sans, sans-serif">1</text>
        </Svg>
      </div>
      <div className="ml-auto mr-1 h-10 w-px bg-[#6e7c7d]" />
    </footer>
  );
}

export default function App() {
  return (
    <div className="flex h-[900px] w-[1600px] flex-col overflow-hidden font-['Open_Sans','Noto_Sans',sans-serif]">
      <header className="h-[103px] bg-[#12509b]">
        <TabStrip />
        <Toolbar />
        <Bookmarks />
      </header>
      <SignupPage />
      <Taskbar />
    </div>
  );
}
